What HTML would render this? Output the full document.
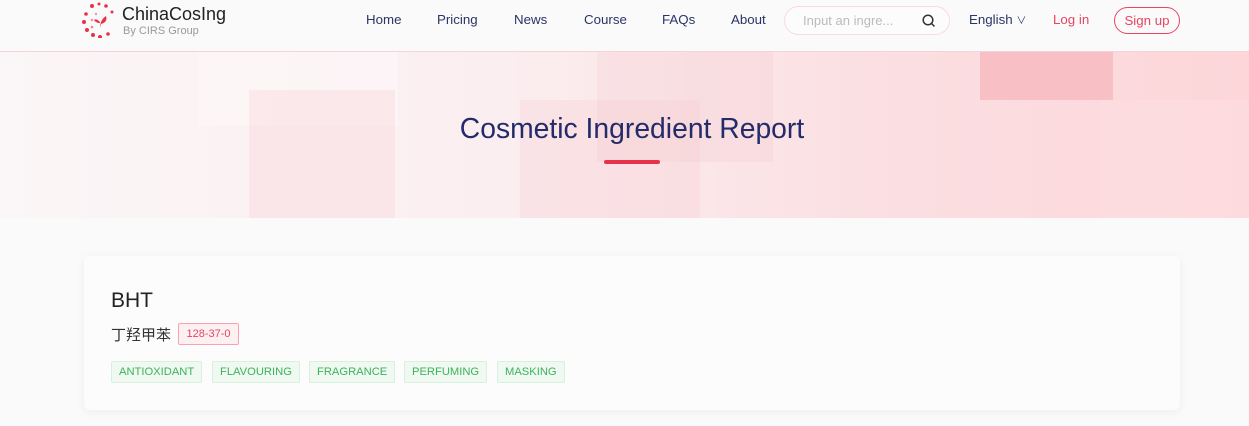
<!DOCTYPE html>
<html><head><meta charset="utf-8"><style>
*{margin:0;padding:0;box-sizing:border-box}
body{width:1249px;height:426px;overflow:hidden;background:#fafafa;font-family:"Liberation Sans","Noto Sans CJK SC",sans-serif;position:relative}
.hdr{position:absolute;left:0;top:0;width:1249px;height:52px;background:#fafafa;border-bottom:1px solid #f6d3d6}
.nav a{position:absolute;top:12px;font-size:13.3px;color:#2a3566;text-decoration:none}
.banner{position:absolute;left:0;top:52px;width:1249px;height:166px;background:linear-gradient(90deg,#fbf6f7 0%,#fbeef0 40%,#fbdfe2 70%,#fcd6d9 100%);overflow:hidden}
.r{position:absolute}
.card{position:absolute;left:84px;top:256px;width:1096px;height:154px;background:#fcfcfc;border-radius:6px;box-shadow:0 2px 10px rgba(0,0,0,.05)}
.tag{position:absolute;top:105px;height:22px;border:1px solid #d8f0dc;background:#eff8f1;color:#3cb45a;font-size:11.2px;line-height:20px;padding:0 7px;border-radius:2px}
</style></head><body>
<div class="hdr">
<svg style="position:absolute;left:82px;top:2px" width="36" height="36" viewBox="0 0 36 36">
<g fill="#e8324a"><circle cx="10" cy="4" r="2"/><circle cx="17" cy="2" r="1.5"/><circle cx="24" cy="4" r="1.8"/><circle cx="4" cy="12" r="1.8"/><circle cx="2" cy="20" r="2"/><circle cx="5" cy="28" r="2"/><circle cx="11" cy="33" r="2"/><circle cx="18" cy="35" r="2"/><circle cx="26" cy="32" r="1.8"/><circle cx="30" cy="10" r="1.5"/><circle cx="10" cy="18" r="1.3" opacity=".5"/><circle cx="14" cy="12" r="1.2" opacity=".5"/><circle cx="10" cy="25" r="1.3" opacity=".6"/><path d="M18 26 Q18 18 24 14 Q26 20 19 22 M18 20 Q14 16 12 18 Q14 21 18 21" /></g></svg>
<div style="position:absolute;left:122px;top:4px;font-size:18px;color:#222">ChinaCosIng</div>
<div style="position:absolute;left:123px;top:25px;font-size:11px;color:#999">By CIRS Group</div>
<div class="nav"><a style="left:366px">Home</a><a style="left:437px">Pricing</a><a style="left:514px">News</a><a style="left:584px">Course</a><a style="left:662px">FAQs</a><a style="left:731px">About</a></div>
<div style="position:absolute;left:784px;top:6px;width:166px;height:29px;border:1px solid #fadadd;border-radius:15px;background:#fcfcfc"><span style="position:absolute;left:18px;top:6px;font-size:13px;color:#bbb">Input an ingre...</span>
<svg style="position:absolute;left:137px;top:7px" width="14" height="14" viewBox="0 0 14 14"><circle cx="6" cy="6" r="4.8" fill="none" stroke="#333" stroke-width="1.5"/><path d="M9.5 9.5 L12.5 12.5" stroke="#333" stroke-width="1.5"/></svg></div>
<div style="position:absolute;left:969px;top:12px;font-size:13.3px;color:#2a3566">English <span style="font-size:10px">&#8744;</span></div>
<div style="position:absolute;left:1053px;top:12px;font-size:13.3px;color:#e84560">Log in</div>
<div style="position:absolute;left:1114px;top:7px;width:66px;height:27px;border:1px solid #e84560;border-radius:14px;font-size:13.3px;color:#e84560;text-align:center;line-height:25px">Sign up</div>
</div>
<div class="banner">
<div class="r" style="left:198px;top:0;width:200px;height:74px;background:rgba(255,255,255,.3)"></div>
<div class="r" style="left:249px;top:38px;width:146px;height:128px;background:rgba(250,210,215,.35)"></div>
<div class="r" style="left:520px;top:48px;width:180px;height:118px;background:rgba(250,205,210,.3)"></div>
<div class="r" style="left:597px;top:0;width:176px;height:110px;background:rgba(245,200,205,.25)"></div>
<div class="r" style="left:980px;top:0;width:133px;height:48px;background:#f8c0c5"></div>
<div class="r" style="left:1100px;top:48px;width:149px;height:118px;background:rgba(255,230,232,.3)"></div>
<div style="position:absolute;left:0;width:1264px;top:60px;text-align:center;font-size:28.3px;color:#232c6a">Cosmetic Ingredient Report</div>
<div style="position:absolute;left:604px;top:108px;width:56px;height:4px;border-radius:2px;background:#e8324a"></div>
</div>
<div class="card">
<div style="position:absolute;left:27px;top:33px;font-size:21px;color:#222">BHT</div>
<div style="position:absolute;left:27px;top:68px;font-size:15px;color:#333">丁羟甲苯</div>
<div style="position:absolute;left:94px;top:67px;height:22px;width:61px;border:1px solid #f7a4b0;background:#fdf0f2;color:#e84560;font-size:11px;line-height:20px;text-align:center;border-radius:2px">128-37-0</div>
<div class="tag" style="left:27px">ANTIOXIDANT</div>
<div class="tag" style="left:128px">FLAVOURING</div>
<div class="tag" style="left:225px">FRAGRANCE</div>
<div class="tag" style="left:320px">PERFUMING</div>
<div class="tag" style="left:413px">MASKING</div>
</div>
</body></html>
